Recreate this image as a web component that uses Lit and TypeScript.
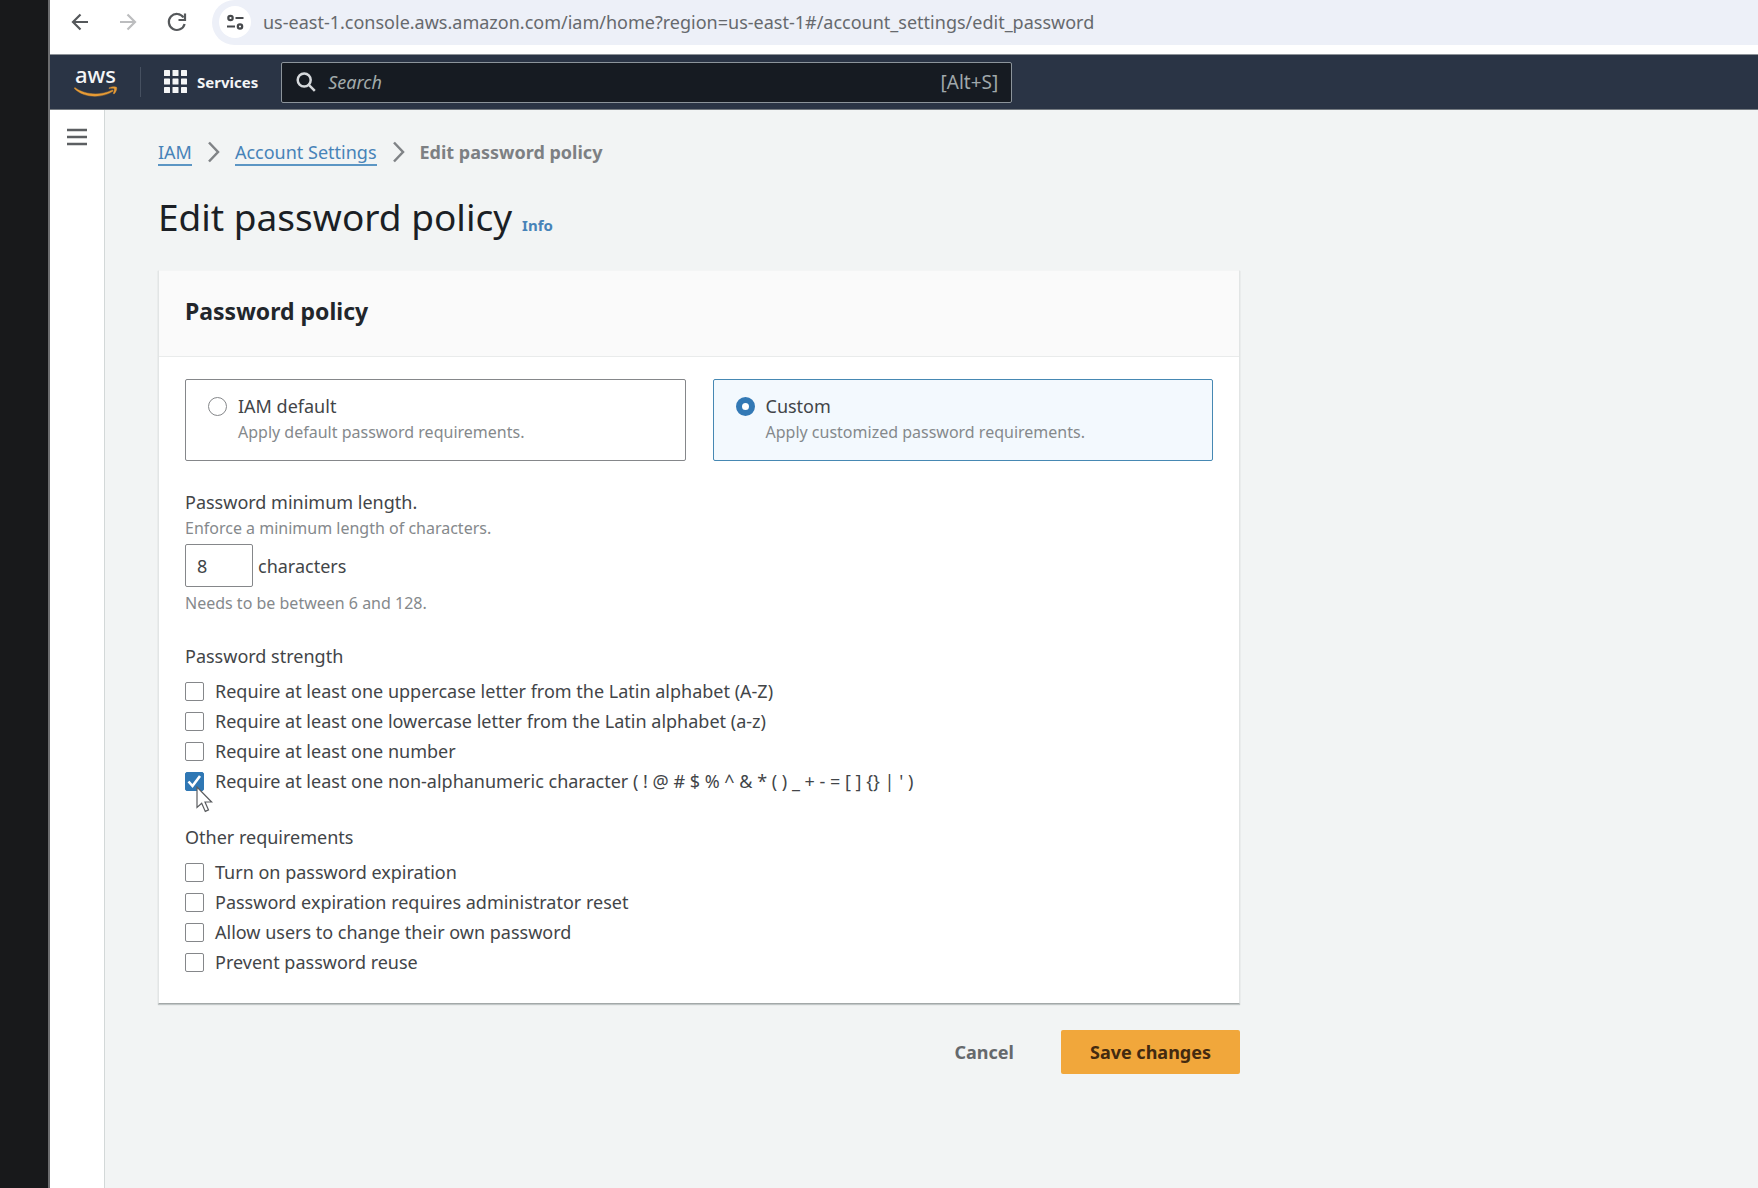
import { LitElement, html, css, svg, nothing } from "lit";
import { customElement, property, state } from "lit/decorators.js";
import { classMap } from "lit/directives/class-map.js";

interface Rule {
  id: string;
  label: string;
  checked: boolean;
  pointer?: boolean;
}

const STRENGTH_RULES: Rule[] = [
  { id: "upper", label: "Require at least one uppercase letter from the Latin alphabet (A-Z)", checked: false },
  { id: "lower", label: "Require at least one lowercase letter from the Latin alphabet (a-z)", checked: false },
  { id: "number", label: "Require at least one number", checked: false },
  {
    id: "symbol",
    label: "Require at least one non-alphanumeric character ( ! @ # $ % ^ & * ( ) _ + - = [ ] {} | ' )",
    checked: true,
    pointer: true,
  },
];

const OTHER_RULES: Rule[] = [
  { id: "expire", label: "Turn on password expiration", checked: false },
  { id: "reset", label: "Password expiration requires administrator reset", checked: false },
  { id: "change", label: "Allow users to change their own password", checked: false },
  { id: "reuse", label: "Prevent password reuse", checked: false },
];

const MODES = [
  { id: "default", label: "IAM default", hint: "Apply default password requirements." },
  { id: "custom", label: "Custom", hint: "Apply customized password requirements." },
];

@customElement("browser-bar")
export class BrowserBar extends LitElement {
  static styles = css`
    :host {
      display: flex;
      height: 54px;
      background: #fff;
      font-family: "Noto Sans", sans-serif;
    }
    .controls {
      display: flex;
      gap: 24px;
      padding: 10px 24px 0 18px;
    }
    button {
      width: 24px;
      height: 24px;
      padding: 0;
      border: 0;
      background: none;
      color: #55585b;
    }
    button:disabled {
      color: #bcbdbf;
    }
    svg {
      display: block;
    }
    .address {
      flex: 1;
      min-width: 0;
      height: 45px;
      box-sizing: border-box;
      display: flex;
      align-items: center;
      gap: 12px;
      padding: 0 0 1px 7px;
      background: #edf0f8;
      border-radius: 24px 0 0 24px;
    }
    .site {
      width: 32px;
      height: 32px;
      border-radius: 50%;
      background: #fff;
      flex: none;
      color: #46494c;
    }
    .url {
      flex: 1;
      min-width: 0;
      padding: 0;
      border: 0;
      outline: 0;
      background: none;
      font: 18px/24px "Noto Sans", sans-serif;
      color: #66696d;
    }
  `;

  render() {
    return html`
      <div class="controls">
        <button aria-label="Back">
          <svg width="24" height="24" viewBox="0 0 24 24" fill="none" stroke="currentColor" stroke-width="2.2">
            <path d="M20 12H5.5M12.5 4.5 5 12l7.5 7.5" />
          </svg>
        </button>
        <button aria-label="Forward" disabled>
          <svg width="24" height="24" viewBox="0 0 24 24" fill="none" stroke="currentColor" stroke-width="2.2">
            <path d="M4 12h14.5M11.5 4.5 19 12l-7.5 7.5" />
          </svg>
        </button>
        <button aria-label="Reload">
          <svg width="24" height="24" viewBox="0 0 24 24" fill="none" stroke="currentColor" stroke-width="2.2">
            <path d="M19.5 7.500A8 8 0 1 0 20.600 14" />
            <path d="M21 3.500V10H14.500" />
          </svg>
        </button>
      </div>
      <div class="address">
        <button class="site" aria-label="View site information">
          <svg width="32" height="32" viewBox="0 0 32 32" fill="none" stroke="currentColor" stroke-width="2.2">
            <circle cx="11.5" cy="12" r="2.2" />
            <path d="M16.5 12h8M8 20.5h8" />
            <circle cx="21" cy="20.5" r="2.2" />
          </svg>
        </button>
        <input
          class="url"
          type="text"
          aria-label="Address"
          .value=${"us-east-1.console.aws.amazon.com/iam/home?region=us-east-1#/account_settings/edit_password"}
        />
      </div>
    `;
  }
}

@customElement("console-nav")
export class ConsoleNav extends LitElement {
  static styles = css`
    :host {
      display: flex;
      align-items: center;
      box-sizing: border-box;
      height: 56px;
      padding-left: 24px;
      background: #2a3445;
      border-top: 1px solid #8d9298;
      border-bottom: 1px solid #747a80;
      font-family: "Noto Sans", sans-serif;
    }
    svg {
      display: block;
    }
    .logo text {
      font: 500 22px "Noto Sans", sans-serif;
      fill: #f4f5f6;
    }
    .divider {
      width: 1px;
      height: 30px;
      margin-left: 22px;
      background: #465060;
    }
    .services {
      display: flex;
      align-items: center;
      gap: 10px;
      margin: 0 23px;
      padding: 0 0 1px;
      border: 0;
      background: none;
      color: #f4f5f6;
      font: 700 15px/24px "Noto Sans", sans-serif;
    }
    .search {
      flex: 0 1 731px;
      min-width: 0;
      box-sizing: border-box;
      height: 41px;
      display: flex;
      align-items: center;
      gap: 12px;
      padding: 0 13px 0 14px;
      background: #161b22;
      border: 1px solid #8c949b;
      border-radius: 2px;
      color: #d5d9dc;
    }
    input {
      flex: 1;
      min-width: 0;
      padding: 0;
      border: 0;
      outline: 0;
      background: none;
      color: #d5d9dc;
      font: 18px/24px "Noto Sans", sans-serif;
    }
    input::placeholder {
      font-style: italic;
      color: #a2abab;
      opacity: 1;
    }
    .keys {
      font-size: 19px;
      line-height: 24px;
      color: #a0a8ab;
    }
  `;

  render() {
    const dots = [0, 1, 2, 3, 4, 5, 6, 7, 8];
    return html`
      <a class="logo" href="#home" aria-label="AWS home">
        <svg width="44" height="44" viewBox="0 0 44 44">
          <text x="1" y="23">aws</text>
          <path d="M.8 27.500C10 35 27 36 38.500 29.900l.7 1.200C27 39 9 37.500.3 28.500z" fill="#e79b34" stroke="#e79b34" stroke-width=".4" />
          <path d="M35 27.800c2.500-1.200 6.500-1.500 7.500-.6.900 1.200-.5 5.200-2.400 6.800l-.9-.5c.9-2.100 1.500-4.200 1-4.800-.6-.7-3.300-.4-5.200-.1z" fill="#e79b34" stroke="#e79b34" stroke-width=".4" />
        </svg>
      </a>
      <span class="divider"></span>
      <button class="services">
        <svg width="23" height="23" viewBox="0 0 23 23" fill="currentColor">
          ${dots.map((n) => svg`<rect x=${(n % 3) * 8.5} y=${Math.floor(n / 3) * 8.5} width="6" height="6" rx=".6" />`)}
        </svg>
        Services
      </button>
      <label class="search">
        <svg width="20" height="20" viewBox="0 0 20 20" fill="none" stroke="currentColor" stroke-width="2.5">
          <circle cx="8.2" cy="8" r="6.5" />
          <path d="m12.8 12.8 6 6" />
        </svg>
        <input type="search" placeholder="Search" aria-label="Search" />
        <span class="keys">[Alt+S]</span>
      </label>
    `;
  }
}

@customElement("rule-group")
export class RuleGroup extends LitElement {
  @property() heading = "";
  @property({ attribute: false }) rules: Rule[] = [];

  static styles = css`
    :host {
      display: block;
      font: 18px/26px "Noto Sans", sans-serif;
      color: #424548;
    }
    fieldset {
      min-width: 0;
      margin: 0;
      padding: 0;
      border: 0;
    }
    legend {
      padding: 0;
      margin-bottom: 7px;
    }
    .row {
      position: relative;
      display: flex;
      align-items: center;
      gap: 11px;
      min-height: 30px;
    }
    input {
      appearance: none;
      flex: none;
      width: 19px;
      height: 19px;
      margin: 0;
      border: 1px solid #85878a;
      border-radius: 2px;
      background: #fff;
    }
    input:checked {
      border-color: #2f77b4;
      background: #2f77b4
        url("data:image/svg+xml,%3Csvg xmlns='http://www.w3.org/2000/svg' viewBox='0 0 17 17'%3E%3Cpath d='M2.500 8.500l4 4.500 7.500-10' fill='none' stroke='white' stroke-width='2.600'/%3E%3C/svg%3E")
        center / 17px 17px no-repeat;
    }
    .pointer {
      position: absolute;
      left: 11px;
      top: 20px;
      pointer-events: none;
    }
  `;

  render() {
    return html`
      <fieldset>
        <legend>${this.heading}</legend>
        ${this.rules.map(
          (rule) => html`
            <div class="row">
              <input type="checkbox" id=${rule.id} .checked=${rule.checked} />
              <label for=${rule.id}>${rule.label}</label>
              ${rule.pointer
                ? html`<svg class="pointer" width="18" height="27" viewBox="0 0 18 27" aria-hidden="true">
                    <path
                      d="M1 1v20.500l4.700-4.300 3.600 8.200 3.200-1.500-3.500-7.900h6.600z"
                      fill="#fff"
                      stroke="#5b5d60"
                      stroke-width="1.200"
                    />
                  </svg>`
                : nothing}
            </div>
          `,
        )}
      </fieldset>
    `;
  }
}

@customElement("policy-card")
export class PolicyCard extends LitElement {
  @state() private mode = "custom";

  static styles = css`
    :host {
      display: block;
      background: #fff;
      border: 1px solid #e2e5e5;
      border-top-color: #f4f5f5;
      border-bottom-color: #a3a8a8;
      box-sizing: border-box;
      box-shadow: 0 1px 1px rgba(0, 20, 20, 0.2);
      font: 18px/26px "Noto Sans", sans-serif;
      color: #424548;
    }
    header {
      padding: 26px 26px 31px;
      background: #fafafa;
      border-bottom: 1px solid #e9ebeb;
    }
    h2 {
      margin: 0;
      font-size: 23px;
      line-height: 28px;
      font-weight: 700;
      color: #22262b;
    }
    .body {
      display: flex;
      flex-direction: column;
      gap: 28px;
      padding: 22px 26px 26px;
    }
    .tiles {
      display: grid;
      grid-template-columns: 1fr 1fr;
      gap: 27px;
    }
    .tile {
      display: flex;
      gap: 11px;
      padding: 13px 22px 16px;
      border: 1px solid #85878a;
      border-radius: 2px;
    }
    .tile.selected {
      background: #f3f9fe;
      border-color: #4688b3;
    }
    .tile input {
      appearance: none;
      flex: none;
      width: 19px;
      height: 19px;
      margin: 4px 0 0;
      border: 1px solid #85878a;
      border-radius: 50%;
      background: #fff;
    }
    .tile input:checked {
      border: 6px solid #3379b5;
    }
    .name,
    .hint {
      display: block;
    }
    .name {
      line-height: 27px;
    }
    .hint {
      font-size: 16px;
      line-height: 24px;
      color: #85898c;
    }
    .entry {
      display: flex;
      align-items: center;
      gap: 5px;
      margin: 4px 0;
    }
    .entry input {
      box-sizing: border-box;
      width: 68px;
      height: 43px;
      padding: 0 11px;
      border: 1px solid #85878a;
      border-radius: 2px;
      background: #fff;
      color: #424548;
      font: 18px/26px "Noto Sans", sans-serif;
    }
  `;

  render() {
    return html`
      <header><h2>Password policy</h2></header>
      <div class="body">
        <div class="tiles" role="radiogroup" aria-label="Password policy">
          ${MODES.map(
            (m) => html`
              <label class=${classMap({ tile: true, selected: this.mode === m.id })}>
                <input
                  type="radio"
                  name="mode"
                  .checked=${this.mode === m.id}
                  @change=${() => (this.mode = m.id)}
                />
                <span>
                  <span class="name">${m.label}</span>
                  <span class="hint">${m.hint}</span>
                </span>
              </label>
            `,
          )}
        </div>
        <div>
          <label class="name" for="length">Password minimum length.</label>
          <span class="hint" id="length-about">Enforce a minimum length of characters.</span>
          <div class="entry">
            <input id="length" type="text" inputmode="numeric" .value=${"8"} aria-describedby="length-about length-range" />
            <span>characters</span>
          </div>
          <span class="hint" id="length-range">Needs to be between 6 and 128.</span>
        </div>
        <rule-group heading="Password strength" .rules=${STRENGTH_RULES}></rule-group>
        <rule-group heading="Other requirements" .rules=${OTHER_RULES}></rule-group>
      </div>
    `;
  }
}

@customElement("app-root")
export class AppRoot extends LitElement {
  static styles = css`
    :host {
      display: flex;
      min-height: 100vh;
      background: #18191b;
      font: 18px/24px "Noto Sans", sans-serif;
      color: #424548;
    }
    .edge {
      flex: none;
      width: 48px;
      border-right: 2px solid #6c6d6f;
    }
    .window {
      flex: 1;
      min-width: 0;
      display: flex;
      flex-direction: column;
    }
    .page {
      flex: 1;
      display: flex;
      background: #f2f4f4;
    }
    .side {
      flex: none;
      width: 54px;
      background: #fff;
      border-right: 1px solid #d3d8d8;
    }
    .menu {
      display: block;
      margin: 16px auto 0;
      padding: 0;
      border: 0;
      background: none;
      color: #5c5f62;
    }
    svg {
      display: block;
    }
    main {
      flex: 1;
      min-width: 0;
      padding: 30px 53px;
    }
    .content {
      max-width: 1082px;
    }
    .crumbs {
      display: flex;
      align-items: flex-start;
      gap: 10px;
      margin-bottom: 29px;
      color: #7d8083;
    }
    .crumbs a {
      color: #4783b8;
      text-decoration: none;
      border-bottom: 2px solid #5c96c4;
    }
    .title {
      display: flex;
      align-items: baseline;
      gap: 10px;
      margin-bottom: 31px;
    }
    h1 {
      margin: 0;
      font-size: 37px;
      line-height: 44px;
      font-weight: 400;
      color: #1b1f25;
    }
    .info {
      font-size: 15px;
      font-weight: 700;
      color: #4783b8;
      text-decoration: none;
    }
    .actions {
      display: flex;
      justify-content: flex-end;
      gap: 18px;
      margin-top: 26px;
    }
    .actions button {
      height: 44px;
      padding: 0 29px;
      border: 0;
      border-radius: 2px;
      background: none;
      color: #66696c;
      font: 700 18px/26px "Noto Sans", sans-serif;
    }
    .actions .primary {
      background: #f1a73b;
      color: #432a10;
    }
  `;

  private chevron() {
    return html`<svg width="23" height="24" viewBox="0 0 23 24" fill="none" stroke="#808386" stroke-width="2.5" aria-hidden="true">
      <path d="m7 2.500 9 9.500-9 9.500" />
    </svg>`;
  }

  render() {
    return html`
      <div class="edge"></div>
      <div class="window">
        <browser-bar></browser-bar>
        <console-nav></console-nav>
        <div class="page">
          <nav class="side" aria-label="Side navigation">
            <button class="menu" aria-label="Open navigation">
              <svg width="20" height="22" viewBox="0 0 20 22" fill="none" stroke="currentColor" stroke-width="2.6">
                <path d="M0 4h20M0 11h20M0 18h20" />
              </svg>
            </button>
          </nav>
          <main>
            <div class="content">
              <nav class="crumbs" aria-label="Breadcrumbs">
                <a href="#iam">IAM</a>
                ${this.chevron()}
                <a href="#account_settings">Account Settings</a>
                ${this.chevron()}
                <strong>Edit password policy</strong>
              </nav>
              <div class="title">
                <h1>Edit password policy</h1>
                <a class="info" href="#info">Info</a>
              </div>
              <policy-card></policy-card>
              <div class="actions">
                <button type="button">Cancel</button>
                <button type="button" class="primary">Save changes</button>
              </div>
            </div>
          </main>
        </div>
      </div>
    `;
  }
}
